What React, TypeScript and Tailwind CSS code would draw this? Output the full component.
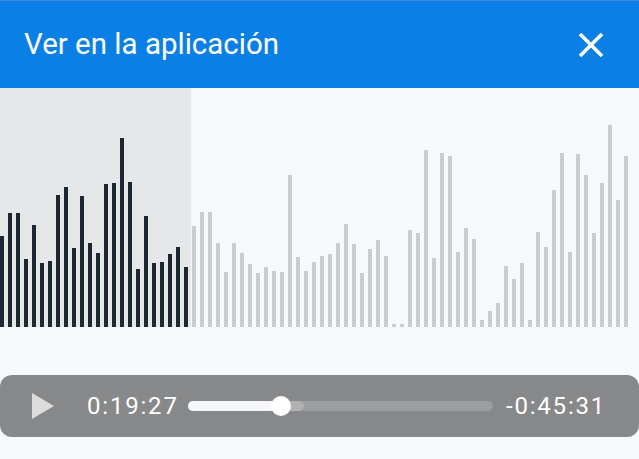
import React from "react";

const tops = [236,213,213,259,225,263,261,195,187,248,196,243,253,184,183,138,182,269,216,263,262,254,247,267,226,212,212,243,272,243,253,264,273,267,271,272,175,257,271,262,256,254,243,224,244,273,249,240,256,324,324,230,233,150,258,153,156,252,228,239,320,311,303,266,279,263,320,232,247,190,153,252,154,175,233,183,125,200,156];

export default function App() {
  return (
    <div className="w-[639px] h-[459px] bg-[#f7f8fa] flex flex-col overflow-hidden" style={{ fontFamily: "Roboto, 'Liberation Sans', sans-serif" }}>
      <header className="h-[88px] shrink-0 bg-[#0a80e6] border-t border-[#3a8dd6] flex items-center justify-between pl-[24px] pr-[35px]">
        <span className="text-white text-[29.5px] leading-none">Ver en la aplicación</span>
        <svg width="26" height="26" viewBox="0 0 26 26" className="mt-[1px]">
          <path d="M2 2 L24 24 M24 2 L2 24" stroke="white" strokeWidth="3.6" strokeLinecap="butt" />
        </svg>
      </header>
      <div className="h-[239px] shrink-0 flex items-end gap-[4px] bg-[linear-gradient(to_right,#e6e7e9_191px,transparent_191px)]">
        {tops.map((t, i) => (
          <div
            key={i}
            className={i < 24 ? "w-[4px] shrink-0 bg-[#1c2733]" : "w-[4px] shrink-0 bg-[#c9ccd1]"}
            style={{ height: 327 - t }}
          />
        ))}
      </div>
      <div className="h-[48px] shrink-0" />
      <div className="h-[62px] shrink-0 rounded-[12px] bg-[#87888a] flex items-center">
        <svg width="22" height="26" viewBox="0 0 22 26" className="ml-[32px] shrink-0">
          <path d="M0 0 L22 13 L0 26 Z" fill="#dcdcdd" />
        </svg>
        <span className="ml-[33px] text-white text-[24px] leading-none tracking-[1.8px] w-[89px] shrink-0 whitespace-nowrap">0:19:27</span>
        <div className="ml-[12px] relative w-[305px] h-[10px] rounded-full bg-[#9d9ea0] shrink-0">
          <div className="absolute left-0 top-0 h-full w-[116px] rounded-full bg-[#b0b1b3]" />
          <div className="absolute left-0 top-0 h-full w-[95px] rounded-full bg-[#f6f7f8]" />
          <div className="absolute left-[83px] top-[-5px] w-[20px] h-[20px] rounded-full bg-white" />
        </div>
        <span className="ml-[13px] text-white text-[24px] leading-none tracking-[1.8px] whitespace-nowrap">-0:45:31</span>
      </div>
      <div className="flex-1" />
    </div>
  );
}
